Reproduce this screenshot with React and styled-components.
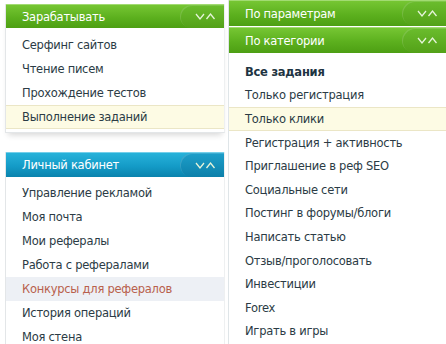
import React from 'react';
import styled, { createGlobalStyle, css } from 'styled-components';

const GlobalStyle = createGlobalStyle`
  html, body {
    margin: 0;
    padding: 0;
    background: #ffffff;
  }
  body {
    font-family: 'DejaVu Sans', Verdana, sans-serif;
    font-size: 11.5px;
    letter-spacing: -0.25px;
    color: #2b3b45;
  }
`;

const Page = styled.div`
  display: flex;
  width: 446px;
  height: 344px;
  overflow: hidden;
`;

const LeftColumn = styled.div`
  width: 220px;
  padding: 4px 3px 0 5px;
  display: flex;
  flex-direction: column;
  gap: 19px;
`;

const RightColumn = styled.div`
  flex: 1;
  border-left: 1px solid #dfe5e8;
  display: flex;
  flex-direction: column;
`;

const Panel = styled.div`
  border-left: 1px solid #e3e6e8;
  border-right: 1px solid #eef0f1;
  padding-bottom: ${p => p.$bottom || 0}px;
  box-shadow: ${p => (p.$shadow ? '0 5px 6px -3px rgba(0, 0, 0, 0.16)' : 'none')};
  border-bottom: ${p => (p.$shadow ? '1px solid #e3e6e8' : 'none')};
`;

const themes = {
  green: css`
    background: linear-gradient(#76c633, #5cb01e 55%, #4d9f13);
    border-top: 1px solid #a2db72;
  `,
  blue: css`
    background: linear-gradient(#27b2da, #149bc7 55%, #0a83ad);
    border-top: 1px solid #74cfea;
  `,
};

const Header = styled.div`
  display: flex;
  align-items: center;
  justify-content: space-between;
  height: ${p => p.$h || 24}px;
  padding: 0 0 0 16px;
  box-sizing: border-box;
  color: #ffffff;
  font-size: 11.5px;
  margin-bottom: ${p => p.$gap || 0}px;
  ${p => themes[p.$tone]}
`;

const Toggle = styled.div`
  width: 44px;
  height: 100%;
  display: flex;
  align-items: center;
  justify-content: center;
  padding-left: 6px;
  box-sizing: border-box;
  border-radius: 16px 0 0 16px;
  background: ${p => (p.$tone === 'blue'
    ? 'linear-gradient(#1d9fca, #0d80aa)'
    : 'linear-gradient(#6bbd2d, #53a118)')};
  box-shadow: inset 1px 1px 0 rgba(255, 255, 255, 0.14);
`;

const List = styled.div`
  display: flex;
  flex-direction: column;
  padding-top: ${p => p.$top || 0}px;
`;

const Item = styled.div`
  height: ${p => p.$h || 24}px;
  display: flex;
  align-items: center;
  padding-left: 16px;
  box-sizing: border-box;
  white-space: nowrap;
  font-weight: ${p => (p.$bold ? 'bold' : 'normal')};
  color: ${p => (p.$bold ? '#1e3442' : '#2b3b45')};
  ${p => p.$active && css`
    background: #fdfbe4;
    border-top: 1px solid #ebe6c6;
    border-bottom: 1px solid #ebe6c6;
  `}
  ${p => p.$hover && css`
    background: #edf0f5;
    color: #b8604c;
  `}
`;

const Chevrons = () => (
  <svg width="21" height="9" viewBox="0 0 21 9">
    <polyline points="1,2 5,7 9,2" fill="none" stroke="#e6f4da" strokeWidth="1.3" />
    <polyline points="11.5,7 15.5,2 19.5,7" fill="none" stroke="#e6f4da" strokeWidth="1.3" />
  </svg>
);

const earn = ['Серфинг сайтов', 'Чтение писем', 'Прохождение тестов', 'Выполнение заданий'];
const cabinet = [
  'Управление рекламой',
  'Моя почта',
  'Мои рефералы',
  'Работа с рефералами',
  'Конкурсы для рефералов',
  'История операций',
  'Моя стена',
];
const categories = [
  'Все задания',
  'Только регистрация',
  'Только клики',
  'Регистрация + активность',
  'Приглашение в реф SEO',
  'Социальные сети',
  'Постинг в форумы/блоги',
  'Написать статью',
  'Отзыв/проголосовать',
  'Инвестиции',
  'Forex',
  'Играть в игры',
];

const App = () => (
  <Page>
    <GlobalStyle />
    <LeftColumn>
      <Panel $shadow $bottom={3}>
        <Header $tone="green">
          Зарабатывать
          <Toggle $tone="green"><Chevrons /></Toggle>
        </Header>
        <List $top={5}>
          {earn.map(label => (
            <Item key={label} $active={label === 'Выполнение заданий'}>{label}</Item>
          ))}
        </List>
      </Panel>
      <Panel>
        <Header $tone="blue" $h={25}>
          Личный кабинет
          <Toggle $tone="blue"><Chevrons /></Toggle>
        </Header>
        <List $top={4}>
          {cabinet.map(label => (
            <Item key={label} $hover={label === 'Конкурсы для рефералов'}>{label}</Item>
          ))}
        </List>
      </Panel>
    </LeftColumn>
    <RightColumn>
      <Header $tone="green" $h={26} $gap={1}>
        По параметрам
        <Toggle $tone="green"><Chevrons /></Toggle>
      </Header>
      <Header $tone="green" $h={26}>
        По категории
        <Toggle $tone="green"><Chevrons /></Toggle>
      </Header>
      <List $top={7}>
        {categories.map((label, i) => (
          <Item key={label} $h={23.6} $bold={i === 0} $active={label === 'Только клики'}>
            {label}
          </Item>
        ))}
      </List>
    </RightColumn>
  </Page>
);

export default App;
